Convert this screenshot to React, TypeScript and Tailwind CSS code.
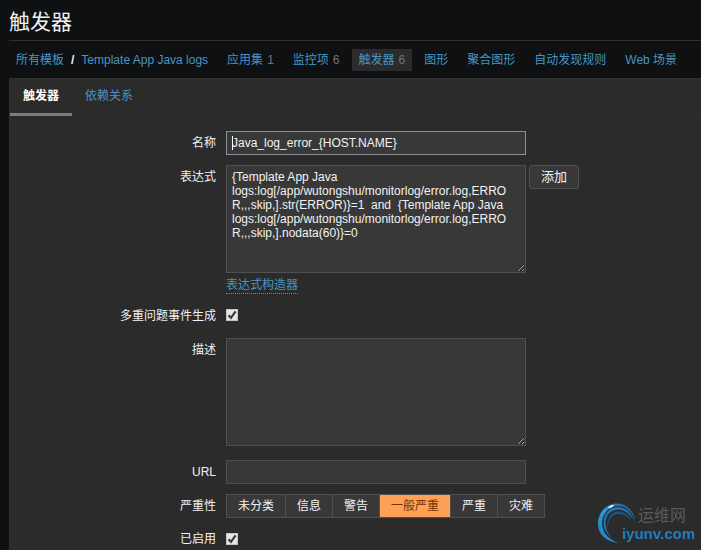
import React, { useState } from 'react';
import clsx from 'clsx';

interface NavItem {
  label: string;
  count?: number;
  active?: boolean;
}

const navItems: NavItem[] = [
  { label: '应用集', count: 1 },
  { label: '监控项', count: 6 },
  { label: '触发器', count: 6, active: true },
  { label: '图形' },
  { label: '聚合图形' },
  { label: '自动发现规则' },
  { label: 'Web 场景' },
];

const severities = ['未分类', '信息', '警告', '一般严重', '严重', '灾难'];

const defaultExpression =
  '{Template App Java logs:log[/app/wutongshu/monitorlog/error.log,ERROR,,,skip,].str(ERROR)}=1  and  {Template App Java logs:log[/app/wutongshu/monitorlog/error.log,ERROR,,,skip,].nodata(60)}=0';

const inputClass =
  'block w-[300px] border border-[#4f4f4f] bg-[#383838] pl-[5px] pr-[13px] text-xs text-[#f2f2f2] outline-none';

interface FieldProps {
  label: string;
  htmlFor?: string;
  className?: string;
  children: React.ReactNode;
}

const Field: React.FC<FieldProps> = ({ label, htmlFor, className, children }) => (
  <div className={clsx('grid grid-cols-[206px_1fr] gap-[10px]', className)}>
    <label htmlFor={htmlFor} className="text-right leading-6">
      {label}
    </label>
    <div>{children}</div>
  </div>
);

const Checkbox: React.FC<{ id: string }> = ({ id }) => (
  <div className="relative flex h-[22px] items-center">
    <input
      id={id}
      type="checkbox"
      defaultChecked
      className="peer size-3 appearance-none border border-[#c4c4c4] bg-[#e6e6e6]"
    />
    <svg
      viewBox="0 0 12 12"
      className="pointer-events-none absolute left-0 hidden size-3 peer-checked:block"
      fill="none"
      stroke="#3a3a3a"
      strokeWidth="2.2"
    >
      <path d="M2.5 6.2 L5 8.8 L9.6 2.4" />
    </svg>
  </div>
);

const Watermark: React.FC = () => (
  <div className="pointer-events-none fixed right-[6px] bottom-1 h-[44px] w-[98px]">
    <svg viewBox="0 0 98 44" className="absolute inset-0 h-full w-full">
      <defs>
        <linearGradient id="swirl" x1="0" y1="1" x2="1" y2="0">
          <stop offset="0" stopColor="#1c80be" />
          <stop offset="0.5" stopColor="#2a9fdb" />
          <stop offset="1" stopColor="#1b4f7c" />
        </linearGradient>
      </defs>
      <path
        d="M22 41 C9 40 1 32 1 22 C1 10 10 1 21 1.500 C30 2 37 9 38.500 19 C35 10 29 4 21 4 C12 4 4.500 12 5 22 C5.500 31 12 38 22 41 Z"
        fill="url(#swirl)"
      />
      <path
        d="M15 36 C9 31 6 26 6.500 20 C7 11 13 5 21 5 C28 5 34 10 36.500 18 C32 11 27 7.500 21 7.500 C14 8 9 13 8.500 20 C8.300 26 10.500 31 15 36 Z"
        fill="#1d78b4"
      />
      <path
        d="M11 28 C8.500 19 13 10 21 9.500 C27 9 32 13 34.500 19 C30 14 26 11.500 21 12 C14 12.500 10.500 19 11 28 Z"
        fill="#1b557f"
      />
      <ellipse cx="14" cy="4.500" rx="3" ry="1" fill="#d6f2ff" transform="rotate(-25 14 4.500)" />
    </svg>
    <span className="absolute top-[4px] right-[9px] text-base leading-5 text-[#5c5c60]">运维网</span>
    <span className="absolute right-0 bottom-[2px] text-[15px] leading-5 font-bold text-[#1f7fc4]">
      iyunv.com
    </span>
  </div>
);

const App: React.FC = () => {
  const [severity, setSeverity] = useState('一般严重');

  return (
    <div className="flex min-h-screen flex-col bg-[#0e1012] pl-[9px] font-['Liberation_Sans','Noto_Sans_CJK_SC',sans-serif] text-xs text-[#f2f2f2]">
      <h1 className="border-b border-[#303030] pt-2 pb-1 text-[21px] leading-7">触发器</h1>

      {/* Template navigation */}
      <nav className="flex items-center gap-[5px] pt-2 pb-[7px] leading-[22px] whitespace-nowrap">
        <div className="flex px-[7px]">
          <a href="#templates" className="text-[#4796c4]">所有模板</a>
          <span className="px-[7px] font-bold">/</span>
          <a href="#template" className="text-[#4796c4]">Template App Java logs</a>
        </div>
        {navItems.map((item) => (
          <div key={item.label} className={clsx('px-[7px]', item.active && 'bg-[#2b2b2b]')}>
            <a href="#nav" className="text-[#4796c4]">{item.label}</a>
            {item.count !== undefined && <span className="pl-1 text-[#737373]">{item.count}</span>}
          </div>
        ))}
      </nav>

      <main className="flex-1 border-t border-l border-[#303030] bg-[#2b2b2b]">
        {/* Tabs */}
        <div className="flex border-b border-[#303030] leading-[34px]">
          <a href="#trigger" className="-mb-px border-b-3 border-[#747f87] px-[13px] font-bold text-white">
            触发器
          </a>
          <a href="#dependencies" className="px-[13px] text-[#4796c4]">依赖关系</a>
        </div>

        <form className="flex flex-col gap-[10px] pt-[15px]" onSubmit={(e) => e.preventDefault()}>
          <Field label="名称" htmlFor="name">
            <div className="relative">
              <input
                id="name"
                type="text"
                defaultValue="Java_log_error_{HOST.NAME}"
                className="block h-6 w-[300px] border border-[#8a8f96] bg-[#383838] px-[5px] text-xs text-[#f2f2f2] outline-none"
              />
              <span className="absolute top-[5px] left-[6px] h-[14px] w-px bg-white" />
            </div>
          </Field>

          <Field label="表达式" htmlFor="expression">
            <div className="flex items-start gap-[3px]">
              <textarea
                id="expression"
                defaultValue={defaultExpression}
                className={clsx(inputClass, 'h-[108px] py-1 leading-[14px]')}
              />
              <button
                type="button"
                className="h-6 rounded-xs border border-[#4f4f4f] bg-[#383838] px-[11px] text-[13px] leading-[22px]"
              >
                添加
              </button>
            </div>
            <div className="flex pt-1">
              <a href="#constructor" className="border-b border-dotted border-[#4796c4] leading-4 text-[#4796c4]">
                表达式构造器
              </a>
            </div>
          </Field>

          <Field label="多重问题事件生成" htmlFor="multiple">
            <Checkbox id="multiple" />
          </Field>

          <Field label="描述" htmlFor="description" className="pb-1">
            <textarea id="description" className={clsx(inputClass, 'h-[108px] py-1 leading-[14px]')} />
          </Field>

          <Field label="URL" htmlFor="url">
            <input id="url" type="text" className={clsx(inputClass, 'h-6')} />
          </Field>

          {/* Severity */}
          <div role="radiogroup" aria-labelledby="severity" className="grid grid-cols-[206px_1fr] gap-[10px]">
            <span id="severity" className="text-right leading-6">严重性</span>
            <div className="flex pl-px">
              {severities.map((name) => (
                <label
                  key={name}
                  className={clsx(
                    'relative -ml-px border border-[#4f4f4f] px-[11px] leading-[22px]',
                    severity === name ? 'bg-[#ffa059] text-[#733100]' : 'bg-[#383838]'
                  )}
                >
                  <input
                    type="radio"
                    name="severity"
                    value={name}
                    checked={severity === name}
                    onChange={() => setSeverity(name)}
                    className="sr-only"
                  />
                  {name}
                </label>
              ))}
            </div>
          </div>

          <div className="grid grid-cols-[206px_1fr] gap-[10px]">
            <label htmlFor="enabled" className="text-right leading-[22px]">已启用</label>
            <Checkbox id="enabled" />
          </div>
        </form>
      </main>

      <Watermark />
    </div>
  );
};

export default App;
